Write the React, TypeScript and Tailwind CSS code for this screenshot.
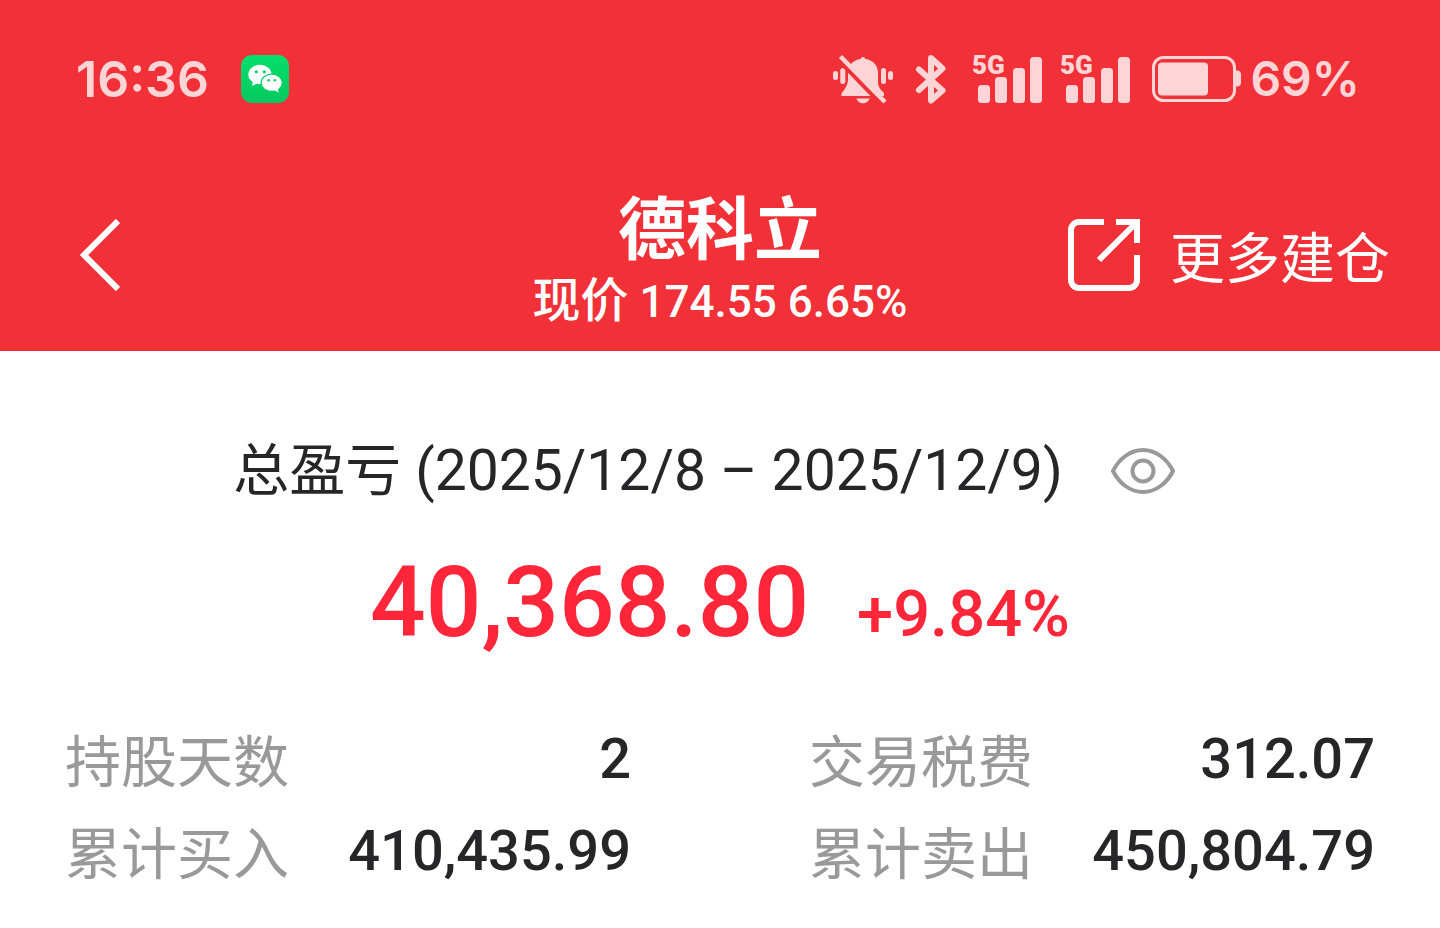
const stats = [
  { label: '持股天数', value: '2' },
  { label: '交易税费', value: '312.07' },
  { label: '累计买入', value: '410,435.99' },
  { label: '累计卖出', value: '450,804.79' },
]

function WeChatIcon() {
  return (
    <svg className="size-12" viewBox="0 0 48 48" aria-label="微信">
      <defs>
        <linearGradient id="wechat" x1="0" y1="0" x2="0" y2="1">
          <stop offset="0" stopColor="#02e06c" />
          <stop offset="1" stopColor="#06c75f" />
        </linearGradient>
      </defs>
      <rect width="48" height="48" rx="11" fill="url(#wechat)" />
      <ellipse cx="19" cy="19.5" rx="11.7" ry="9.7" fill="#fff" />
      <path d="M12 26l-1 5 6-3z" fill="#fff" />
      <ellipse cx="30.7" cy="27.8" rx="11.2" ry="9.2" fill="#04d265" />
      <ellipse cx="30.7" cy="27.8" rx="10" ry="8" fill="#fff" />
      <path d="M33 35l4.500 2.500-.8-4.500z" fill="#fff" />
      <g fill="#04d265">
        <circle cx="15.300" cy="16.800" r="1.600" />
        <circle cx="23.300" cy="16.800" r="1.600" />
        <circle cx="27.700" cy="25.300" r="1.300" />
        <circle cx="33.900" cy="25.300" r="1.300" />
      </g>
    </svg>
  )
}

function MutedBellIcon() {
  return (
    <svg className="h-[50px] w-[62px]" viewBox="0 0 62 50" fill="currentColor" aria-hidden="true">
      <rect x="1" y="17" width="5" height="9" rx="2.500" />
      <rect x="8.300" y="14" width="5" height="16" rx="2.500" />
      <rect x="49" y="14" width="5" height="16" rx="2.500" />
      <rect x="56" y="17" width="5" height="9" rx="2.500" />
      <path d="M28.500 5a2.600 2.600 0 0 1 5 0C41.500 6 46 12 46 19v9c0 5 3 8 6 11v3H9.500v-2.500C13 35 16 31 16 25v-6c0-7 4.500-13 12.500-14z" />
      <path d="M24.300 44.500h13.400c-1.200 3.200-3.700 4.800-6.700 4.800s-5.500-1.600-6.700-4.800z" />
      <path d="M5.500 5l45 46.500" stroke="#f13038" strokeWidth="4" />
      <path d="M8.500 2.500L53 48" stroke="currentColor" strokeWidth="4.500" />
    </svg>
  )
}

function BluetoothIcon() {
  return (
    <svg className="h-[50px] w-[34px]" viewBox="0 0 34 50" fill="none" stroke="currentColor" strokeWidth="6" strokeLinejoin="round" strokeLinecap="round" aria-hidden="true">
      <path d="M5 15.500L28.500 36.500 17 46.500V4l11.500 10.500L5 36" />
    </svg>
  )
}

function SignalIcon() {
  return (
    <svg className="h-[50px] w-[72px] overflow-visible" viewBox="0 0 72 50" fill="currentColor" aria-hidden="true">
      <text x="0" y="20" className="font-['Roboto'] text-[26px] font-black">5G</text>
      <rect x="6" y="31" width="12" height="18" rx="3.500" />
      <rect x="23" y="23" width="12" height="26" rx="3.500" />
      <rect x="41" y="14" width="12" height="35" rx="3.500" />
      <rect x="58" y="3" width="12" height="46" rx="3.500" />
    </svg>
  )
}

function BatteryIcon() {
  return (
    <svg className="h-[46px] w-[90px]" viewBox="0 0 90 46" fill="currentColor" aria-hidden="true">
      <rect x="1.500" y="1.500" width="81" height="43" rx="10" fill="none" stroke="currentColor" strokeWidth="3" />
      <rect x="6" y="6.500" width="50" height="33" rx="4" />
      <path d="M83 14.500h2a4 4 0 0 1 4 4v8a4 4 0 0 1-4 4h-2z" />
    </svg>
  )
}

function StatusBar() {
  return (
    <div className="flex h-[158px] items-start justify-between pt-[53px] pr-20 pl-[76px] font-['Inter',sans-serif] font-semibold text-[#fdd5d7]">
      <div className="flex items-center gap-8">
        <span className="text-[50px] leading-[52px]">16:36</span>
        <WeChatIcon />
      </div>
      <div className="flex items-center">
        <MutedBellIcon />
        <div className="ml-5 flex gap-6">
          <BluetoothIcon />
          <div className="flex gap-4">
            <SignalIcon />
            <SignalIcon />
          </div>
        </div>
        <div className="ml-5 flex items-center gap-2">
          <BatteryIcon />
          <span className="text-[48px] leading-[52px]">69%</span>
        </div>
      </div>
    </div>
  )
}

export default function App() {
  return (
    <div className="min-h-screen bg-white font-['Roboto','Noto_Sans_CJK_SC',sans-serif] text-[#262628]">
      <header className="bg-[#f13038] pb-4 text-white">
        <StatusBar />
        <nav className="grid h-[177px] grid-cols-[1fr_auto_1fr] items-end px-[50px]">
          <button type="button" aria-label="返回" className="mb-11 ml-[30px] justify-self-start">
            <svg className="h-[72px] w-10" viewBox="0 0 40 72" fill="none" stroke="currentColor" strokeWidth="6">
              <path d="M38 2L4 36 38 70" />
            </svg>
          </button>
          <div className="text-center font-medium">
            <h1 className="text-[68px] leading-[74px] font-bold">德科立</h1>
            <p className="text-[44px] leading-[66px]">
              <span className="text-[48px]">现价</span> 174.55 6.65%
            </p>
          </div>
          <button type="button" className="mb-11 flex h-[72px] items-center gap-[30px] justify-self-end">
            <svg className="size-[72px]" viewBox="0 0 72 72" fill="none" stroke="currentColor" strokeWidth="6" aria-hidden="true">
              <path d="M36 3H11a8 8 0 0 0-8 8v50a8 8 0 0 0 8 8h50a8 8 0 0 0 8-8V36" />
              <path d="M48 3h21v21M68 4L31 41" />
            </svg>
            <span className="pt-2 text-[55px] leading-[72px]">更多建仓</span>
          </button>
        </nav>
      </header>
      <main className="pt-[84px]">
        <div className="flex items-center justify-center gap-12 pr-8">
          <h2 className="text-[56px] leading-[72px]">
            总盈亏 <span className="text-[57px]">(2025/12/8 – 2025/12/9)</span>
          </h2>
          <button type="button" aria-label="隐藏金额">
            <svg className="h-12 w-16" viewBox="0 0 64 48" fill="none" stroke="#999" strokeWidth="4">
              <path d="M2 24C8 12 19 3 32 3s24 9 30 21c-6 12-17 21-30 21S8 36 2 24z" />
              <circle cx="32" cy="24" r="10.500" />
            </svg>
          </button>
        </div>
        <div className="mt-10 flex items-baseline justify-center gap-12 font-medium text-[#fe2638]">
          <strong className="text-[98px] leading-[112px] font-medium">40,368.80</strong>
          <span className="text-[65px] leading-[72px]">+9.84%</span>
        </div>
        <dl className="mt-15 grid grid-cols-2 gap-x-[178px] gap-y-3 px-[65px]">
          {stats.map((stat) => (
            <div key={stat.label} className="flex items-center justify-between">
              <dt className="pt-2 text-[56px] leading-[72px] text-[#999]">{stat.label}</dt>
              <dd className="text-[56px] leading-[72px] font-medium">{stat.value}</dd>
            </div>
          ))}
        </dl>
      </main>
    </div>
  )
}
